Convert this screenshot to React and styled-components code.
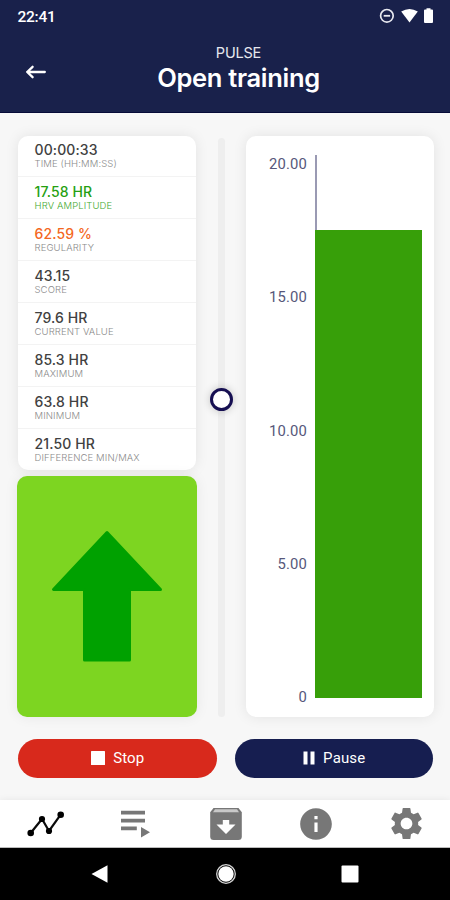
import React from "react";
import styled, { createGlobalStyle } from "styled-components";
import { MdInfo, MdSettings } from "react-icons/md";

const GlobalStyle = createGlobalStyle`
  *, *::before, *::after { box-sizing: border-box; }
  body { margin: 0; background: #f7f7f7; }
`;

const Screen = styled.div`
  width: 450px;
  height: 900px;
  display: flex;
  flex-direction: column;
  overflow: hidden;
  background: #f7f7f7;
  font-family: Inter, "Liberation Sans", sans-serif;
`;

const Header = styled.header`
  height: 113px;
  flex: none;
  background: #19214b;
  border-bottom: 1px solid #070b38;
  color: #fff;
`;

const StatusBar = styled.div`
  height: 32px;
  padding: 0 16px 0 17.5px;
  display: flex;
  align-items: center;
  justify-content: space-between;
`;

const Clock = styled.span`
  font: 500 15.5px/32px Roboto, sans-serif;
  letter-spacing: -0.25px;
  padding-top: 1px;
`;

const StatusIcons = styled.svg`
  width: 56px;
  height: 18px;
  display: block;
`;

const TitleBar = styled.div`
  display: grid;
  grid-template-columns: 72px 1fr 45px;
  height: 80px;
`;

const BackButton = styled.button`
  border: 0;
  padding: 0;
  background: none;
  display: flex;
  align-items: center;
  justify-content: center;
  svg { width: 24px; height: 18px; }
`;

const Titles = styled.div`
  display: flex;
  flex-direction: column;
  align-items: center;
  padding-top: 12px;
`;

const Eyebrow = styled.div`
  font-size: 14.5px;
  line-height: 18px;
  letter-spacing: -0.2px;
  color: #e6e7ee;
`;

const Title = styled.h1`
  margin: 0;
  font-size: 25.5px;
  line-height: 32px;
  font-weight: 600;
  letter-spacing: -0.3px;
  white-space: nowrap;
`;

const Main = styled.main`
  height: 604px;
  flex: none;
  padding: 23px 16.5px 0 17px;
  display: grid;
  grid-template-columns: 180px 49px 187.5px;
`;

const LeftColumn = styled.div`
  display: flex;
  flex-direction: column;
  gap: 6px;
`;

const Card = styled.section`
  background: #fff;
  border-radius: 10px;
  box-shadow: 0 0 14px rgba(0, 0, 0, 0.085);
`;

const MetricCard = styled(Card)`
  height: 334px;
  margin: 0 1px;
  overflow: hidden;
`;

const Metric = styled.div`
  height: 42px;
  padding: 6px 0 0 16.5px;
  border-bottom: 1px solid #f3f3f3;
  color: ${(p) => p.$color || "#414141"};
  &:first-child { height: 41px; padding-top: 5px; }
  &:last-child { border: 0; }
`;

const MetricValue = styled.div`
  font-size: 14px;
  line-height: 17px;
  font-weight: 500;
  letter-spacing: 0.12px;
`;

const MetricLabel = styled.div`
  font-size: 9.5px;
  line-height: 11px;
  font-weight: 300;
  letter-spacing: 0.12px;
  color: ${(p) => p.$color || "#8a8a8a"};
`;

const Direction = styled.div`
  height: 241px;
  border-radius: 10px;
  background: #7dd521;
  box-shadow: 0 0 14px rgba(0, 0, 0, 0.07);
  svg { display: block; width: 180px; height: 241px; }
`;

const SliderTrack = styled.div`
  width: 7px;
  height: 579px;
  margin: 2px auto 0;
  border-radius: 4px;
  background: #eeeeee;
  display: flex;
  justify-content: center;
  padding-top: 250px;
`;

const SliderThumb = styled.div`
  flex: none;
  width: 23px;
  height: 23px;
  border: 3px solid #160f52;
  border-radius: 50%;
  background: #fff;
  box-shadow: 0 0 8px rgba(0, 0, 0, 0.22);
`;

const ChartCard = styled(Card)`
  height: 581px;
  display: grid;
  grid-template-columns: 61px 8px 107px;
  padding: 19px 0;
`;

const AxisLabels = styled.div`
  display: flex;
  flex-direction: column;
  justify-content: space-between;
  text-align: right;
  padding-top: 1px;
  margin-bottom: -8px;
  font: 400 14.8px/17px Roboto, sans-serif;
  letter-spacing: 0.15px;
  color: #56577a;
`;

const Plot = styled.div`
  grid-column: 3;
  height: 543px;
  display: flex;
  flex-direction: column;
`;

const AxisLine = styled.div`
  flex: 1;
  width: 2px;
  background: #9a9ab3;
`;

const Bar = styled.div`
  height: 468px;
  flex: none;
  background: #379f09;
`;

const Actions = styled.div`
  height: 83px;
  flex: none;
  padding: 22px 17px 0 18px;
  display: grid;
  grid-template-columns: 199px 198px;
  gap: 18px;
`;

const ActionButton = styled.button`
  height: 39px;
  border: 0;
  border-radius: 20px;
  background: ${(p) => p.$color};
  color: #fff;
  display: flex;
  align-items: center;
  justify-content: center;
  gap: 8.5px;
  padding: 0 0 1px;
  font: 400 15px/18px Roboto, sans-serif;
  letter-spacing: 0.15px;
  svg { display: block; height: 14px; }
`;

const TabBar = styled.nav`
  height: 48px;
  flex: none;
  background: #fff;
  border-bottom: 1px solid #bbb;
  box-shadow: 0 0 7px rgba(0, 0, 0, 0.07);
  display: grid;
  grid-template-columns: repeat(5, 90px);
  padding-left: 1px;
`;

const Tab = styled.a`
  display: flex;
  align-items: center;
  justify-content: center;
  color: #777;
`;

const SystemBar = styled.div`
  height: 52px;
  flex: none;
  background: #000;
  display: flex;
  justify-content: space-between;
  align-items: center;
  padding: 0 91px 0 91px;
`;

const metrics = [
  { value: "00:00:33", label: "TIME (HH:MM:SS)" },
  { value: "17.58 HR", label: "HRV AMPLITUDE", color: "#269f12", labelColor: "#3fa92f" },
  { value: "62.59 %", label: "REGULARITY", color: "#f46722" },
  { value: "43.15", label: "SCORE" },
  { value: "79.6 HR", label: "CURRENT VALUE" },
  { value: "85.3 HR", label: "MAXIMUM" },
  { value: "63.8 HR", label: "MINIMUM" },
  { value: "21.50 HR", label: "DIFFERENCE MIN/MAX" },
];

const ticks = ["20.00", "15.00", "10.00", "5.00", "0"];

export default function App() {
  return (
    <>
      <GlobalStyle />
      <Screen>
        <Header>
          <StatusBar>
            <Clock>22:41</Clock>
            <StatusIcons viewBox="378 7 56 18">
              <circle cx="386.900" cy="15.800" r="6.300" fill="none" stroke="#e8e9f0" strokeWidth="1.700" />
              <path d="M383.700 15.800h6.400" stroke="#e8e9f0" strokeWidth="1.800" />
              <path d="M401.200 11.600Q409.500 6.200 417.800 11.600L409.500 22.600Z" fill="#fff" />
              <path d="M424 10.500q0-1 1-1h1.500V8.300h4v1.200h1.500q1 0 1 1V22q0 1-1 1h-7q-1 0-1-1z" fill="#fff" />
            </StatusIcons>
          </StatusBar>
          <TitleBar>
            <BackButton aria-label="Back">
              <svg viewBox="0 0 24 18" fill="none" stroke="#fff" strokeWidth="2.300" strokeLinecap="round" strokeLinejoin="round">
                <path d="M20.800 9H3.200M8.600 3.800L3.200 9l5.400 5.200" />
              </svg>
            </BackButton>
            <Titles>
              <Eyebrow>PULSE</Eyebrow>
              <Title>Open training</Title>
            </Titles>
          </TitleBar>
        </Header>

        <Main>
          <LeftColumn>
            <MetricCard>
              {metrics.map((m) => (
                <Metric key={m.label} $color={m.color}>
                  <MetricValue>{m.value}</MetricValue>
                  <MetricLabel $color={m.labelColor}>{m.label}</MetricLabel>
                </Metric>
              ))}
            </MetricCard>
            <Direction>
              <svg viewBox="17 476 180 241">
                <path
                  d="M107 532.500L53.500 589.500H84.500V660H129.500V589.500H160.500Z"
                  fill="#00a100"
                  stroke="#00a100"
                  strokeWidth="3"
                  strokeLinejoin="round"
                />
              </svg>
            </Direction>
          </LeftColumn>
          <SliderTrack>
            <SliderThumb />
          </SliderTrack>
          <ChartCard>
            <AxisLabels>
              {ticks.map((t) => (
                <span key={t}>{t}</span>
              ))}
            </AxisLabels>
            <Plot>
              <AxisLine />
              <Bar />
            </Plot>
          </ChartCard>
        </Main>

        <Actions>
          <ActionButton $color="#d8291c">
            <svg width="14" viewBox="0 0 14 14"><rect width="14" height="14" rx="0.5" fill="#fff" /></svg>
            Stop
          </ActionButton>
          <ActionButton $color="#161e50">
            <svg width="12" viewBox="0 0 12 14"><path d="M0.500 0.500h4v13h-4zM7.500 0.500h4v13h-4z" fill="#fff" /></svg>
            Pause
          </ActionButton>
        </Actions>

        <TabBar>
          <Tab>
            <svg width="40" height="30" viewBox="26 809 40 30">
              <path d="M30.700 833L42 819L49 831L60.500 814.800" fill="none" stroke="#0b0b0b" strokeWidth="2.200" />
              <circle cx="30.700" cy="833" r="3.300" />
              <circle cx="42" cy="819" r="3.100" />
              <circle cx="49" cy="831" r="3.100" />
              <circle cx="60.700" cy="814.800" r="3.300" />
            </svg>
          </Tab>
          <Tab>
            <svg width="32" height="32" viewBox="120 807.5 32 32" fill="#777">
              <path d="M121 810.300h24v3.700h-24zM121 818.200h24v3.700h-24zM121 826.100h15.800v3.600h-15.800zM141 826.500l9 5.300l-9 5.300z" />
            </svg>
          </Tab>
          <Tab>
            <svg width="34" height="34" viewBox="0 0 34 34">
              <path d="M4.500 1h25l3.300 4.200V29.500q0 3.500-3.500 3.500H4.700q-3.500 0-3.500-3.500V5.200z" fill="#777" />
              <path d="M6 2.300h22l2 3H4z" fill="#c9c9c9" />
              <path d="M13.800 13h6.400v4.500h6.300L17 27l-9.500-9.500h6.300z" fill="#fff" />
            </svg>
          </Tab>
          <Tab><MdInfo size={38} /></Tab>
          <Tab><MdSettings size={39} /></Tab>
        </TabBar>

        <SystemBar>
          <svg width="17" height="18" viewBox="0 0 17 18"><path d="M0.500 9L16.500 0.300V17.700Z" fill="#fff" /></svg>
          <svg width="22" height="22" viewBox="0 0 22 22">
            <circle cx="12" cy="11" r="9.300" fill="none" stroke="#d5d5d5" strokeWidth="1.300" />
            <circle cx="12" cy="11" r="7.700" fill="#fff" />
          </svg>
          <svg width="18" height="18" viewBox="0 0 18 18"><rect x="0.500" y="0.500" width="17" height="17" rx="1" fill="#fff" /></svg>
        </SystemBar>
      </Screen>
    </>
  );
}
